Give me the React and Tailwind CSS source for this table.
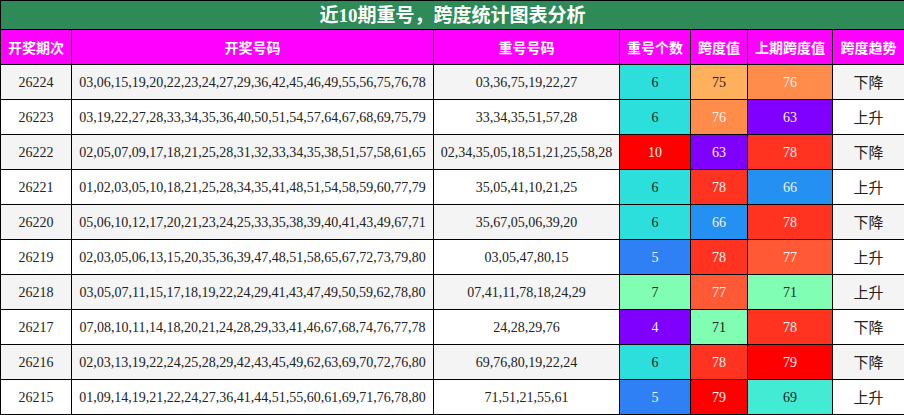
import React from "react";

const C = {
  cyan: "bg-[#2ddfdc] text-[#222]",
  lorange: "bg-[#ffb05c] text-[#222]",
  orange: "bg-[#ff8c4a] text-[#f4f4f4]",
  purple: "bg-[#8000ff] text-[#f4f4f4]",
  red: "bg-[#ff0000] text-[#f4f4f4]",
  rorange: "bg-[#ff3320] text-[#f4f4f4]",
  blue: "bg-[#2390f2] text-[#f4f4f4]",
  blue2: "bg-[#2f80f4] text-[#f4f4f4]",
  o77: "bg-[#ff5a35] text-[#f4f4f4]",
  mint: "bg-[#80ffb4] text-[#222]",
  turq: "bg-[#42ebd4] text-[#222]",
};

const rows = [
  ["26224", "03,06,15,19,20,22,23,24,27,29,36,42,45,46,49,55,56,75,76,78", "03,36,75,19,22,27", ["6", C.cyan], ["75", C.lorange], ["76", C.orange], "下降"],
  ["26223", "03,19,22,27,28,33,34,35,36,40,50,51,54,57,64,67,68,69,75,79", "33,34,35,51,57,28", ["6", C.cyan], ["76", C.orange], ["63", C.purple], "上升"],
  ["26222", "02,05,07,09,17,18,21,25,28,31,32,33,34,35,38,51,57,58,61,65", "02,34,35,05,18,51,21,25,58,28", ["10", C.red], ["63", C.purple], ["78", C.rorange], "下降"],
  ["26221", "01,02,03,05,10,18,21,25,28,34,35,41,48,51,54,58,59,60,77,79", "35,05,41,10,21,25", ["6", C.cyan], ["78", C.rorange], ["66", C.blue], "上升"],
  ["26220", "05,06,10,12,17,20,21,23,24,25,33,35,38,39,40,41,43,49,67,71", "35,67,05,06,39,20", ["6", C.cyan], ["66", C.blue], ["78", C.rorange], "下降"],
  ["26219", "02,03,05,06,13,15,20,35,36,39,47,48,51,58,65,67,72,73,79,80", "03,05,47,80,15", ["5", C.blue2], ["78", C.rorange], ["77", C.o77], "上升"],
  ["26218", "03,05,07,11,15,17,18,19,22,24,29,41,43,47,49,50,59,62,78,80", "07,41,11,78,18,24,29", ["7", C.mint], ["77", C.o77], ["71", C.mint], "上升"],
  ["26217", "07,08,10,11,14,18,20,21,24,28,29,33,41,46,67,68,74,76,77,78", "24,28,29,76", ["4", C.purple], ["71", C.mint], ["78", C.rorange], "下降"],
  ["26216", "02,03,13,19,22,24,25,28,29,42,43,45,49,62,63,69,70,72,76,80", "69,76,80,19,22,24", ["6", C.cyan], ["78", C.rorange], ["79", C.red], "下降"],
  ["26215", "01,09,14,19,21,22,24,27,36,41,44,51,55,60,61,69,71,76,78,80", "71,51,21,55,61", ["5", C.blue2], ["79", C.red], ["69", C.turq], "上升"],
];

const serif = "font-['Liberation_Serif','Noto_Sans_CJK_SC',serif]";
const sans = "font-['Noto_Sans_CJK_SC',sans-serif]";

export default function App() {
  const headers = ["开奖期次", "开奖号码", "重号号码", "重号个数", "跨度值", "上期跨度值", "跨度趋势"];
  return (
    <div className="w-[904px] h-[415px] bg-white">
      <table className={`w-[904px] table-fixed border-collapse ${serif}`}>
        <colgroup>
          <col className="w-[71px]" />
          <col className="w-[362px]" />
          <col className="w-[186px]" />
          <col className="w-[71px]" />
          <col className="w-[57px]" />
          <col className="w-[85px]" />
          <col className="w-[72px]" />
        </colgroup>
        <tbody>
          <tr className="h-[29px]">
            <td colSpan={7} className="border border-black bg-[#2e8b57] text-white text-[19px] font-bold text-center p-0 leading-none">
              近10期重号，跨度统计图表分析
            </td>
          </tr>
          <tr className="h-[35px]">
            {headers.map((h) => (
              <td key={h} className={`border border-black bg-[#ff00ff] text-white font-bold text-[14px] text-center p-0 ${sans}`}>
                {h}
              </td>
            ))}
          </tr>
          {rows.map((r, i) => (
            <tr key={r[0]} className={`h-[35px] ${i % 2 === 0 ? "bg-[#f4f4f4]" : "bg-white"} text-[14px] text-[#222]`}>
              <td className="border border-black text-center p-0">{r[0]}</td>
              <td className="border border-black text-center p-0">{r[1]}</td>
              <td className="border border-black text-center p-0">{r[2]}</td>
              <td className={`border border-black text-center p-0 ${r[3][1]}`}>{r[3][0]}</td>
              <td className={`border border-black text-center p-0 ${r[4][1]}`}>{r[4][0]}</td>
              <td className={`border border-black text-center p-0 ${r[5][1]}`}>{r[5][0]}</td>
              <td className={`border border-black text-center p-0 text-[15px] ${sans}`}>{r[6]}</td>
            </tr>
          ))}
        </tbody>
      </table>
    </div>
  );
}
